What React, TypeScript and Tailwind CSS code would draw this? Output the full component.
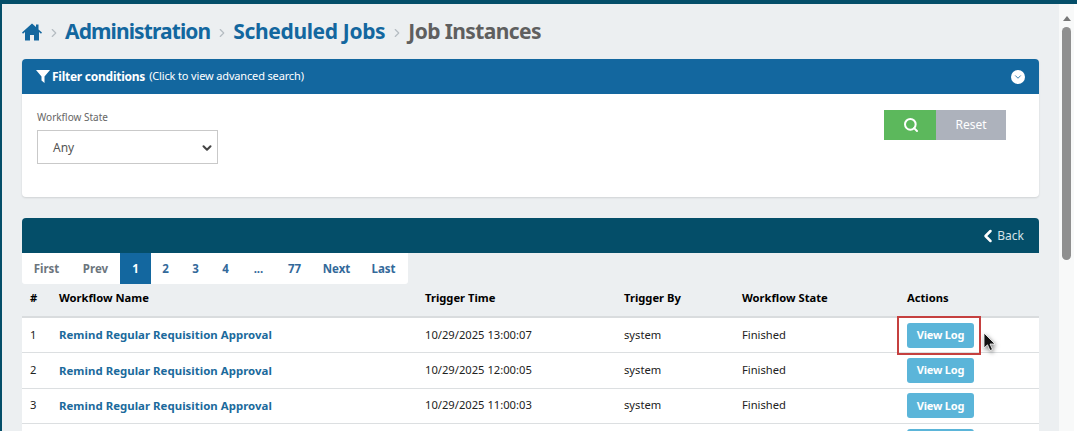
import React from 'react';
import { ChevronLeft, ChevronRight, ChevronDown, Search } from 'lucide-react';

const rows = [
  { id: 1, time: '10/29/2025 13:00:07' },
  { id: 2, time: '10/29/2025 12:00:05' },
  { id: 3, time: '10/29/2025 11:00:03' },
  { id: 4, time: '10/29/2025 10:00:04' },
];

const pages = [
  { label: 'First', className: 'w-[49px] text-[#6c757d]' },
  { label: 'Prev', className: 'w-[49px] text-[#6c757d]' },
  { label: '1', className: 'w-[31px] bg-[#13679f] text-white' },
  { label: '2', className: 'w-[29px] text-[#33699a]' },
  { label: '3', className: 'w-[31px] text-[#33699a]' },
  { label: '4', className: 'w-[29px] text-[#33699a]' },
  { label: '...', className: 'w-[37px] text-[#33699a]' },
  { label: '77', className: 'w-[35px] text-[#33699a]' },
  { label: 'Next', className: 'w-[49px] text-[#33699a]' },
  { label: 'Last', className: 'w-[47px] pr-[2px] text-[#33699a]' },
];

const Sep = () => <ChevronRight size={14} strokeWidth={2} className="mx-[4.5px] mt-[2px] text-[#b5bcc2]" />;

const App: React.FC = () => {
  return (
    <div className="flex h-[431px] w-[1077px] flex-col overflow-hidden bg-white font-['Noto_Sans','Open_Sans',sans-serif]">
      <div className="h-1 shrink-0 bg-[#044e69]" />
      <div className="flex min-h-0 flex-1">
        <div className="w-[2px] shrink-0 bg-[#044e69]" />
        <main className="w-[1057px] shrink-0 bg-[#eceff1] pl-5 pr-5">
          <nav className="flex h-[55px] items-center pt-[1px]">
            <svg width="20" height="18" viewBox="0 0 20 18" className="text-[#13679f]" fill="currentColor">
              <path d="M10 .5 0 9.6l1 1.2L3 9v8.500h5V12h4v5.500h5V9l2 1.800 1-1.200-3.500-3.200V1.500h-2.500v2.500z" />
            </svg>
            <Sep />
            <span className="text-[21px] font-bold tracking-[-0.9px] text-[#13679f]">Administration</span>
            <Sep />
            <span className="text-[21px] font-bold tracking-[-0.35px] text-[#13679f]">Scheduled Jobs</span>
            <Sep />
            <span className="text-[21px] font-bold tracking-[-0.6px] text-[#5f5f5f]">Job Instances</span>
          </nav>

          <section className="rounded-[4px] bg-white shadow-[0_1px_2px_rgba(0,0,0,0.12)]">
            <div className="flex h-[35px] items-center rounded-t-[4px] bg-[#13679f] pl-[14px] pr-[14px] text-white">
              <svg width="14" height="13" viewBox="0 0 14 13" fill="currentColor" className="mr-[2px]">
                <path d="M0 0h14L8.500 6.500V13L5.500 10.500V6.500z" />
              </svg>
              <span className="text-[12px] font-bold tracking-[-0.25px]">Filter conditions</span>
              <span className="ml-1 text-[11px] tracking-[-0.15px]">(Click to view advanced search)</span>
              <span className="ml-auto flex h-[14px] w-[14px] items-center justify-center rounded-full bg-white text-[#13679f]">
                <ChevronDown size={10} strokeWidth={2} />
              </span>
            </div>
            <div className="flex h-[103px] justify-between pl-[15px] pr-[33px] pt-4">
              <div>
                <label className="block text-[10px] leading-[14px] text-[#666]">Workflow State</label>
                <div className="mt-[6px] flex h-[34px] w-[181px] items-center justify-between border border-[#c9c9c9] pl-[15px] pr-[3px] pt-[2px] text-[12px] text-[#555]">
                  <span>Any</span>
                  <ChevronDown size={14} strokeWidth={3.500} className="text-[#444]" />
                </div>
              </div>
              <div className="flex h-[30px]">
                <button className="flex w-[52px] items-center justify-center bg-[#5cb85c] pl-[2px] text-white">
                  <Search size={16} strokeWidth={3} />
                </button>
                <button className="w-[70px] bg-[#adb2bc] text-[12px] text-white">Reset</button>
              </div>
            </div>
          </section>

          <section className="mt-[21px]">
            <div className="flex h-[35px] items-center justify-end rounded-t-[4px] bg-[#044e69] pr-[15px] text-white">
              <ChevronLeft size={20} strokeWidth={3} />
              <span className="-ml-[1px] text-[12px] text-[#d5e2e8]">Back</span>
            </div>
            <div className="flex h-[31px] w-[386px] items-stretch rounded-b-[3px] bg-white">
              {pages.map(p => (
                <span key={p.label} className={`flex items-center justify-center text-[11.5px] font-bold ${p.className}`}>
                  {p.label}
                </span>
              ))}
            </div>
            <table className="w-full table-fixed border-collapse text-[11.2px] text-[#222]">
              <thead>
                <tr className="h-[33px] border-b-2 border-[#d9dcde] text-left font-bold text-black">
                  <th className="w-[37px] pb-[3px] pl-2">#</th>
                  <th className="w-[366px] pb-[3px]">Workflow Name</th>
                  <th className="w-[199px] pb-[3px]">Trigger Time</th>
                  <th className="w-[118px] pb-[3px]">Trigger By</th>
                  <th className="w-[165px] pb-[3px]">Workflow State</th>
                  <th className="pb-[3px]">Actions</th>
                </tr>
              </thead>
              <tbody className="bg-white">
                {rows.map(r => (
                  <tr key={r.id} className="h-[35.500px] border-b border-[#dcdfe1]">
                    <td className="pl-2">{r.id}</td>
                    <td className="text-[11.4px] font-bold tracking-[0.04px] text-[#1b6a9c]">Remind Regular Requisition Approval</td>
                    <td>{r.time}</td>
                    <td>system</td>
                    <td>Finished</td>
                    <td>
                      <span className="relative inline-flex h-[25px] w-[67px] items-center justify-center rounded-[3px] bg-[#5bb5d9] text-[11px] font-bold tracking-[-0.2px] text-white align-middle">
                        View Log
                        {r.id === 1 && (
                          <>
                            <span className="absolute -left-[10px] -top-[7px] h-[39px] w-[84px] border-2 border-[#c5403f]" />
                            <svg width="14" height="20" viewBox="0 0 14 20" className="absolute left-[76px] top-[9px] drop-shadow-[1px_2px_2px_rgba(0,0,0,0.5)]">
                              <path d="M1 1v15l3.500-3.200L7 18.500l2.500-1-2.500-5.500h5z" fill="#111" stroke="#fff" strokeWidth="0.8" />
                            </svg>
                          </>
                        )}
                      </span>
                    </td>
                  </tr>
                ))}
              </tbody>
            </table>
          </section>
        </main>
        <div className="flex w-[15px] shrink-0 flex-col items-center bg-[#f8f9f9] pt-[12px]">
          <span className="h-0 w-0 border-x-[4px] border-b-[5px] border-x-transparent border-b-[#777]" />
          <span className="mt-[6px] h-[233px] w-[9px] rounded-full bg-[#8f8f8f]" />
        </div>
        <div className="w-[3px] shrink-0 bg-white" />
      </div>
    </div>
  );
};

export default App;
